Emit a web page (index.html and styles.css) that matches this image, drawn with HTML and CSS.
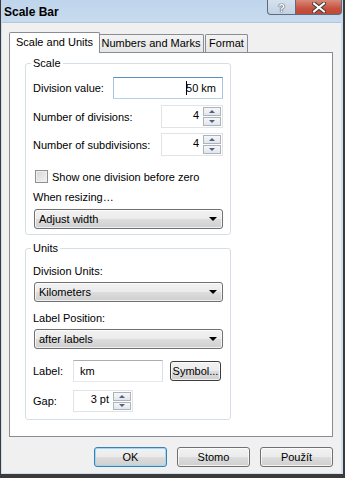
FILE: index.html
```html
<!DOCTYPE html>
<html>
<head>
<meta charset="utf-8">
<link rel="stylesheet" href="styles.css">
</head>
<body>
<div class="window">
  <div class="frame">
    <div class="titlebar">
      <span class="title">Scale Bar</span>
      <div class="caption-btns">
        <div class="cbtn help">?</div>
        <div class="cbtn close">
          <svg width="14" height="11" viewBox="0 0 14 11"><path d="M2 1.5 L12 9.5 M12 1.5 L2 9.5" stroke="#3b3b3b" stroke-width="4" stroke-linecap="square"/><path d="M2 1.5 L12 9.5 M12 1.5 L2 9.5" stroke="#ffffff" stroke-width="2" stroke-linecap="square"/></svg>
        </div>
      </div>
    </div>
    <div class="client">
      <div class="tabs">
        <div class="tab selected">Scale and Units</div>
        <div class="tab numbers">Numbers and Marks</div>
        <div class="tab format">Format</div>
      </div>
      <div class="panel">
        <fieldset class="group scale">
          <legend>Scale</legend>
          <div class="row r1">
            <span>Division value:</span>
            <div class="textbox focused wide"><span class="caret"></span>50 km</div>
          </div>
          <div class="row r2">
            <span>Number of divisions:</span>
            <div class="spin"><span class="val">4</span><div class="arrows"><div class="sb up"></div><div class="sb down"></div></div></div>
          </div>
          <div class="row r3">
            <span>Number of subdivisions:</span>
            <div class="spin"><span class="val">4</span><div class="arrows"><div class="sb up"></div><div class="sb down"></div></div></div>
          </div>
          <label class="check"><span class="box"></span>Show one division before zero</label>
          <div class="lbl resize">When resizing…</div>
          <div class="combo c1"><span>Adjust width</span><span class="tri"></span></div>
        </fieldset>
        <fieldset class="group units">
          <legend>Units</legend>
          <div class="lbl du">Division Units:</div>
          <div class="combo c2"><span>Kilometers</span><span class="tri"></span></div>
          <div class="lbl lp">Label Position:</div>
          <div class="combo c2"><span>after labels</span><span class="tri"></span></div>
          <div class="row labelrow">
            <span class="short">Label:</span>
            <div class="textbox mid">km</div>
            <div class="btn symbol">Symbol...</div>
          </div>
          <div class="row gaprow">
            <span class="short">Gap:</span>
            <div class="spin small"><span class="val">3 pt</span><div class="arrows"><div class="sb up"></div><div class="sb down"></div></div></div>
          </div>
        </fieldset>
      </div>
      <div class="buttons">
        <div class="btn dlg default">OK</div>
        <div class="btn dlg">Stomo</div>
        <div class="btn dlg">Použít</div>
      </div>
    </div>
  </div>
</div>
</body>
</html>
```
FILE: styles.css
```css
* { box-sizing: border-box; }
html, body { margin: 0; padding: 0; }
body {
  background: #3b3b3b;
  font-family: "Liberation Sans", Arial, sans-serif;
  font-size: 11px;
  color: #000;
}
.window {
  width: 345px;
  height: 478px;
  background: #3b3b3b;
  padding: 0 2px 4px 1px;
}
.frame {
  height: 100%;
  background: linear-gradient(#bfd5ec, #cfdff0 40px, #cfdff0);
  padding: 0 2px 1px 1px;
  display: flex;
  flex-direction: column;
}
.titlebar {
  height: 23px;
  display: flex;
  justify-content: space-between;
  align-items: flex-start;
  border-bottom: 1px solid #b3c6dc;
}
.title {
  font-weight: bold;
  font-size: 12px;
  line-height: 14px;
  margin: 5px 0 0 2px;
  color: #000;
}
.caption-btns {
  display: flex;
  margin-right: -1px;
}
.cbtn {
  height: 15px;
  border: 1px solid #5a6b82;
  border-top: none;
  display: flex;
  align-items: center;
  justify-content: center;
}
.help {
  width: 28px;
  border-radius: 0 0 0 4px;
  border-right: none;
  background: linear-gradient(#d6e1ed, #c3d1e2);
  color: #fff;
  font-weight: bold;
  font-size: 11px;
  line-height: 12px;
  padding-top: 1px;
  text-shadow: 0 0 1px #44556b, 0 0 1px #44556b, 0 0 1px #44556b;
}
.close {
  width: 47px;
  border-radius: 0 0 4px 0;
  background: linear-gradient(#d88a7a, #c7513f 60%, #c44a33);
}
.client {
  flex: 1;
  background: #f0f0f0;
  padding: 9px 8px 0 7px;
  display: flex;
  flex-direction: column;
}
.tabs {
  display: flex;
  align-items: flex-end;
  height: 21px;
  position: relative;
  z-index: 1;
}
.tab {
  border: 1px solid #898c95;
  border-bottom: none;
  height: 18px;
  line-height: 17px;
  text-align: center;
  white-space: nowrap;
  background: linear-gradient(#f3f3f3, #e6e6e6);
  border-radius: 2px 2px 0 0;
}
.tab.selected {
  height: 21px;
  width: 91px;
  background: #fff;
  line-height: 19px;
  position: relative;
  z-index: 2;
}
.tab.numbers { width: 106px; margin-left: -2px; margin-bottom: 1px; }
.tab.format { width: 43px; margin-left: 1px; margin-bottom: 1px; }
.panel {
  margin-top: -1px;
  height: 385px;
  border: 1px solid #898c95;
  background: #fff;
  padding: 3px 0 0 15px;
}
fieldset.group {
  margin: 0;
  width: 206px;
  border: 1px solid #d5dfe5;
  border-radius: 3px;
  padding: 0 7px 5px 7px;
}
fieldset.units { margin-top: 6px; padding-bottom: 7px; }
legend {
  padding: 0 2px;
  margin-left: -2px;
  line-height: 15px;
}
.row {
  display: flex;
  align-items: center;
  justify-content: space-between;
}
.r1 { margin-top: 6px; }
.r2 { margin-top: 6px; }
.r3 { margin-top: 5px; }
.textbox {
  height: 22px;
  border: 1px solid;
  border-color: #abadb3 #dbdfe6 #e3e9ef #e2e3ea;
  background: #fff;
  padding: 0 6px;
  line-height: 20px;
}
.textbox.focused {
  border-color: #5b8fc2 #a7c4e2 #b7d1eb #a7c4e2;
}
.wide { width: 110px; text-align: right; position: relative; }
.caret {
  display: inline-block;
  width: 1px;
  height: 14px;
  background: #000;
  vertical-align: -3px;
  margin-right: -1px;
}
.mid { width: 90px; }
.spin {
  width: 62px;
  height: 23px;
  border: 1px solid #e0e3e8;
  background: #fff;
  display: flex;
  align-items: center;
  justify-content: flex-end;
  padding: 1px 1px 1px 0;
}
.spin .val { margin-right: 4px; margin-top: -4px; }
.arrows {
  display: flex;
  flex-direction: column;
  gap: 1px;
  height: 100%;
}
.sb {
  width: 18px;
  flex: 1;
  border: 1px solid #aeb2b9;
  background: linear-gradient(#f6f7f9, #e2e6eb);
  display: flex;
  align-items: center;
  justify-content: center;
}
.sb::after {
  content: "";
  width: 0;
  height: 0;
  border-left: 3px solid transparent;
  border-right: 3px solid transparent;
}
.sb.up::after { border-bottom: 3px solid #4d6185; }
.sb.down::after { border-top: 3px solid #4d6185; }
.check {
  display: flex;
  align-items: center;
  margin-top: 13px;
  height: 15px;
}
.box {
  width: 13px;
  height: 13px;
  border: 1px solid #8f8f8f;
  background: linear-gradient(135deg, #d5d5d5, #f4f4f4);
  box-shadow: inset 0 0 0 1px #f0f0f0;
  margin: 0 4px 0 2px;
}
.lbl { line-height: 15px; }
.resize { margin-top: 6px; }
.combo {
  height: 20px;
  border: 1px solid #707070;
  border-radius: 3px;
  background: linear-gradient(#f2f2f2 0%, #ebebeb 50%, #dddddd 50%, #cfcfcf 100%);
  box-shadow: inset 0 0 0 1px rgba(255,255,255,0.7);
  display: flex;
  align-items: center;
  justify-content: space-between;
  padding: 0 5px 0 4px;
  margin-left: 1px;
}
.tri {
  width: 0;
  height: 0;
  border-left: 4px solid transparent;
  border-right: 4px solid transparent;
  border-top: 4px solid #000;
}
.c1 { margin-top: 4px; }
.du { margin-top: 8px; }
.c2 { margin-top: 3px; }
.lp { margin-top: 9px; }
.labelrow { margin-top: 11px; justify-content: flex-start; }
.short { width: 40px; }
.btn {
  border: 1px solid #707070;
  border-radius: 3px;
  background: linear-gradient(#f2f2f2 0%, #ebebeb 50%, #dddddd 50%, #cfcfcf 100%);
  box-shadow: inset 0 0 0 1px rgba(255,255,255,0.7);
  display: flex;
  align-items: center;
  justify-content: center;
}
.symbol {
  width: 51px;
  height: 20px;
  margin-left: 7px;
  border-color: #3c3c3c;
}
.gaprow { margin-top: 8px; justify-content: flex-start; }
.spin.small { width: 60px; height: 22px; }
.buttons {
  display: flex;
  justify-content: flex-end;
  gap: 10px;
  margin-top: 10px;
}
.dlg { width: 73px; height: 20px; }
.dlg.default {
  border-color: #3c7fb1;
  box-shadow: inset 0 0 0 1px #9fd8f5;
}
```
